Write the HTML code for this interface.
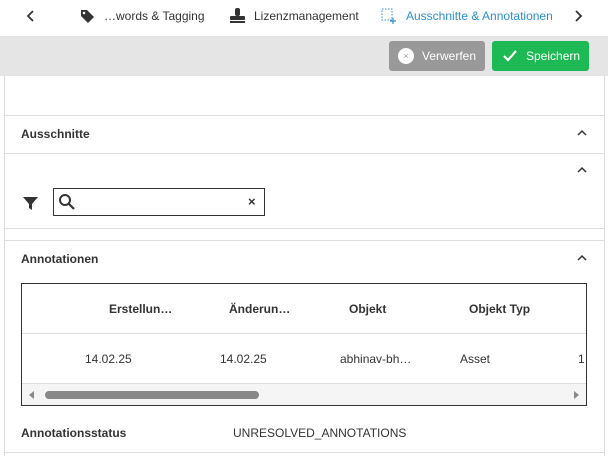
<!DOCTYPE html>
<html><head><style>
*{margin:0;padding:0;box-sizing:border-box}
body{width:608px;height:456px;overflow:hidden;background:#fff;font-family:"Liberation Sans",Arial,sans-serif;position:relative;color:#333}
.a{position:absolute}
.t{font-size:12px;white-space:nowrap}
.b{font-weight:bold}
.hl{position:absolute;left:4px;width:600px;height:1px;background:#ddd}
.chev{position:absolute;left:577px;width:10px;height:10px}
</style></head><body>
<svg class="a" style="left:26px;top:9px" width="10" height="14"><path d="M7 2 L2 7 L7 12" fill="none" stroke="#333" stroke-width="1.8"/></svg>
<svg class="a" style="left:80px;top:9px" width="16" height="14"><path d="M1 1 H7 L14 8 L8 14 L1 7 Z" fill="#333"/><circle cx="4" cy="4" r="1.3" fill="#fff"/></svg>
<div class="a t" style="left:104px;top:9px">…words &amp; Tagging</div>
<svg class="a" style="left:228px;top:7px" width="20" height="18"><rect x="7" y="1" width="5" height="8" rx="2" fill="#333"/><rect x="2" y="9" width="15" height="4" rx="1" fill="#333"/><rect x="2" y="14" width="15" height="2" fill="#333"/></svg>
<div class="a t" style="left:254px;top:9px">Lizenzmanagement</div>
<svg class="a" style="left:381px;top:8px" width="16" height="16"><rect x="1" y="1" width="10" height="11" fill="none" stroke="#2a8fd0" stroke-width="1" stroke-dasharray="1.5 1.5"/><path d="M12 10 V16 M9 13 H15" stroke="#2a8fd0" stroke-width="1.2"/></svg>
<div class="a t" style="left:406px;top:9px;color:#2a8fd0">Ausschnitte &amp; Annotationen</div>
<svg class="a" style="left:573px;top:9px" width="10" height="14"><path d="M3 2 L8 7 L3 12" fill="none" stroke="#333" stroke-width="1.8"/></svg>
<div class="a" style="left:0;top:36px;width:608px;height:40px;background:#e5e5e5"></div>
<div class="a" style="left:389px;top:41px;width:96px;height:30px;background:#999;border-radius:3px"></div>
<div class="a" style="left:398px;top:48px;width:16px;height:16px;border-radius:50%;background:#fff;color:#999;font-size:9px;text-align:center;line-height:16px">×</div>
<div class="a t" style="left:422px;top:49px;color:#fff">Verwerfen</div>
<div class="a" style="left:492px;top:41px;width:97px;height:30px;background:#1db954;border-radius:3px"></div>
<svg class="a" style="left:502px;top:48px" width="16" height="16"><path d="M2 8 L6 12 L14 3" fill="none" stroke="#fff" stroke-width="2.2"/></svg>
<div class="a t" style="left:526px;top:49px;color:#fff">Speichern</div>
<div class="a" style="left:4px;top:76px;width:1px;height:380px;background:#ddd"></div>
<div class="a" style="left:604px;top:76px;width:1px;height:380px;background:#ddd"></div>
<div class="hl" style="top:115px"></div>
<div class="a t b" style="left:21px;top:127px">Ausschnitte</div>
<svg class="chev" style="top:128px"><path d="M1 7 L5 3 L9 7" fill="none" stroke="#333" stroke-width="1.5"/></svg>
<div class="hl" style="top:153px"></div>
<svg class="chev" style="top:165px"><path d="M1 7 L5 3 L9 7" fill="none" stroke="#333" stroke-width="1.5"/></svg>
<svg class="a" style="left:22px;top:196px" width="18" height="16"><path d="M1 1 H16 L10 8 V14 L7 12 V8 Z" fill="#333"/></svg>
<div class="a" style="left:53px;top:188px;width:212px;height:28px;border:1px solid #333"></div>
<svg class="a" style="left:58px;top:193px" width="18" height="18"><circle cx="7" cy="7" r="5" fill="none" stroke="#333" stroke-width="2"/><path d="M11 11 L16 16" stroke="#333" stroke-width="2.2"/></svg>
<div class="a" style="left:248px;top:194px;font-size:13px;color:#333;font-weight:bold">×</div>
<div class="hl" style="top:228px"></div>
<div class="hl" style="top:240px"></div>
<div class="a t b" style="left:21px;top:252px">Annotationen</div>
<svg class="chev" style="top:253px"><path d="M1 7 L5 3 L9 7" fill="none" stroke="#333" stroke-width="1.5"/></svg>
<div class="a" style="left:21px;top:283px;width:566px;height:123px;border:1px solid #333;overflow:hidden">
<div class="a t b" style="left:87px;top:18px">Erstellun…</div>
<div class="a t b" style="left:207px;top:18px">Änderun…</div>
<div class="a t b" style="left:327px;top:18px">Objekt</div>
<div class="a t b" style="left:447px;top:18px">Objekt Typ</div>
<div class="a" style="left:0;top:49px;width:566px;height:1px;background:#ddd"></div>
<div class="a t" style="left:63px;top:68px">14.02.25</div>
<div class="a t" style="left:198px;top:68px">14.02.25</div>
<div class="a t" style="left:318px;top:68px">abhinav-bh…</div>
<div class="a t" style="left:438px;top:68px">Asset</div>
<div class="a t" style="left:556px;top:68px">1</div>
<div class="a" style="left:0;top:99px;width:566px;height:1px;background:#ddd"></div>
<div class="a" style="left:0;top:100px;width:566px;height:22px;background:#f5f5f5"></div>
<svg class="a" style="left:7px;top:107px" width="6" height="8"><path d="M5 0 L0 4 L5 8Z" fill="#888"/></svg>
<div class="a" style="left:23px;top:107px;width:214px;height:8px;border-radius:4px;background:#888"></div>
<svg class="a" style="left:552px;top:107px" width="6" height="8"><path d="M0 0 L5 4 L0 8Z" fill="#888"/></svg>
</div>
<div class="a t b" style="left:21px;top:426px">Annotationsstatus</div>
<div class="a t" style="left:233px;top:426px">UNRESOLVED_ANNOTATIONS</div>
<div class="hl" style="top:452px"></div>
</body></html>
